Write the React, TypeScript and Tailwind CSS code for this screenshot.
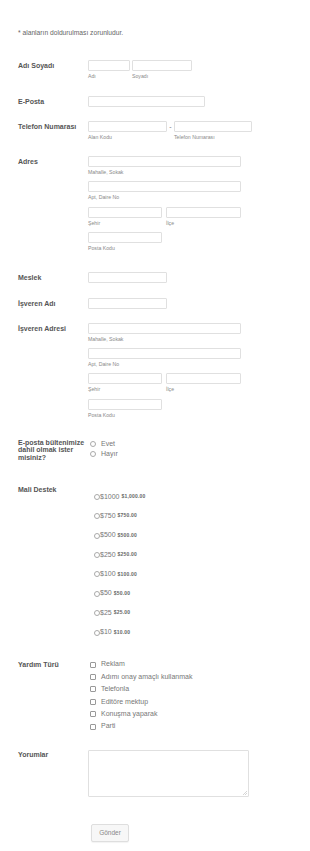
import React from "react";

const Inp = ({ w }: { w: string }) => (
  <div className={`h-[11px] ${w} border border-[#e0e0e0] bg-white rounded-[1px] shrink-0`} />
);

const Sub = ({ t }: { t: string }) => (
  <div className="mt-[2px] text-[5.2px] leading-[6px] text-[#8a8a8a]">{t}</div>
);

const Label = ({ t, cls = "" }: { t: string; cls?: string }) => (
  <div className={`w-[70px] shrink-0 font-bold text-[7px] leading-[11px] text-[#555] ${cls}`}>{t}</div>
);

const Address = ({ gap }: { gap: string }) => (
  <div className={`flex flex-col ${gap}`}>
    <div>
      <Inp w="w-[153px]" />
      <Sub t="Mahalle, Sokak" />
    </div>
    <div>
      <Inp w="w-[153px]" />
      <Sub t="Apt, Daire No" />
    </div>
    <div className="flex gap-[4px]">
      <div>
        <Inp w="w-[74px]" />
        <Sub t="Şehir" />
      </div>
      <div>
        <Inp w="w-[75px]" />
        <Sub t="İlçe" />
      </div>
    </div>
    <div>
      <Inp w="w-[74px]" />
      <Sub t="Posta Kodu" />
    </div>
  </div>
);

const Radio = () => (
  <span className="inline-block w-[6px] h-[6px] rounded-full border border-[#aaa] bg-white shrink-0" />
);
const Check = () => (
  <span className="inline-block w-[6px] h-[6px] rounded-[1px] border border-[#999] bg-white shrink-0" />
);

const products: [string, string][] = [
  ["$1000", "$1,000.00"],
  ["$750", "$750.00"],
  ["$500", "$500.00"],
  ["$250", "$250.00"],
  ["$100", "$100.00"],
  ["$50", "$50.00"],
  ["$25", "$25.00"],
  ["$10", "$10.00"],
];

const helps = ["Reklam", "Adımı onay amaçlı kullanmak", "Telefonla", "Editöre mektup", "Konuşma yaparak", "Parti"];

export default function App() {
  return (
    <div
      className="w-[310px] min-h-[851px] bg-white pl-[18px] pt-[29px] pb-[15px]"
      style={{ fontFamily: '"Liberation Sans", Arial, sans-serif' }}
    >
      <div className="text-[6.7px] leading-[8px] text-[#666]">* alanların doldurulması zorunludur.</div>

      {/* Adı Soyadı */}
      <div className="flex mt-[23px]">
        <Label t="Adı Soyadı" />
        <div className="flex gap-[2px]">
          <div>
            <Inp w="w-[42px]" />
            <Sub t="Adı" />
          </div>
          <div>
            <Inp w="w-[60px]" />
            <Sub t="Soyadı" />
          </div>
        </div>
      </div>

      {/* E-Posta */}
      <div className="flex mt-[17px]">
        <Label t="E-Posta" />
        <Inp w="w-[117px]" />
      </div>

      {/* Telefon */}
      <div className="flex mt-[14px]">
        <Label t="Telefon Numarası" />
        <div className="flex">
          <div>
            <Inp w="w-[79px]" />
            <Sub t="Alan Kodu" />
          </div>
          <div className="w-[7px] text-center text-[7px] leading-[11px] text-[#777]">-</div>
          <div>
            <Inp w="w-[78px]" />
            <Sub t="Telefon Numarası" />
          </div>
        </div>
      </div>

      {/* Adres */}
      <div className="flex mt-[16px]">
        <Label t="Adres" />
        <Address gap="gap-[6.3px]" />
      </div>

      {/* Meslek */}
      <div className="flex mt-[21px]">
        <Label t="Meslek" />
        <Inp w="w-[79px]" />
      </div>

      {/* İşveren Adı */}
      <div className="flex mt-[15px]">
        <Label t="İşveren Adı" />
        <Inp w="w-[79px]" />
      </div>

      {/* İşveren Adresi */}
      <div className="flex mt-[14px]">
        <Label t="İşveren Adresi" />
        <Address gap="gap-[6.3px]" />
      </div>

      {/* Bülten */}
      <div className="flex mt-[21px]">
        <div className="w-[70px] shrink-0 font-bold text-[7px] leading-[7.5px] text-[#555] pr-[3px]">
          E-posta bültenimize dahil olmak ister misiniz?
        </div>
        <div className="flex flex-col pl-[2px]">
          {["Evet", "Hayır"].map((o) => (
            <div key={o} className="flex items-center h-[10px] gap-[5px] text-[7px] text-[#777]">
              <Radio />
              <span>{o}</span>
            </div>
          ))}
        </div>
      </div>

      {/* Mali Destek */}
      <div className="flex mt-[23px]">
        <Label t="Mali Destek" />
        <div className="flex flex-col gap-[9.4px] pt-[7.5px] pl-[5.5px]">
          {products.map(([a, b]) => (
            <div key={a} className="flex items-center h-[10px] text-[#777]">
              <Radio />
              <span className="text-[7px] ml-[0.5px]">{a}</span>
              <span className="text-[5px] font-bold ml-[2px] tracking-[0.2px] text-[#666]">{b}</span>
            </div>
          ))}
        </div>
      </div>

      {/* Yardım Türü */}
      <div className="flex mt-[21px]">
        <div className="w-[70px] shrink-0 font-bold text-[7px] leading-[12.4px] text-[#555]">Yardım Türü</div>
        <div className="flex flex-col pl-[2px]">
          {helps.map((h) => (
            <div key={h} className="flex items-center h-[12.4px] gap-[5px] text-[7px] text-[#777]">
              <Check />
              <span>{h}</span>
            </div>
          ))}
        </div>
      </div>

      {/* Yorumlar */}
      <div className="flex mt-[17px]">
        <div className="w-[70px] shrink-0 font-bold text-[7px] leading-[10px] text-[#555]">Yorumlar</div>
        <div className="relative">
          <textarea className="block w-[161px] h-[47px] border border-[#e0e0e0] bg-white rounded-[1px] outline-none resize-none" />
          <svg className="absolute right-[2px] bottom-[2px]" width="4" height="4" viewBox="0 0 4 4">
            <path d="M4 0 L0 4 M4 2 L2 4" stroke="#bbb" strokeWidth="0.6" />
          </svg>
        </div>
      </div>

      {/* Gönder */}
      <div className="mt-[21px] pl-[73px]">
        <button className="w-[38px] h-[18px] border border-[#dedede] bg-[#f7f7f7] rounded-[2px] text-[6.5px] text-[#888] shadow-[0_1px_1px_rgba(0,0,0,0.05)]">
          Gönder
        </button>
      </div>
    </div>
  );
}
